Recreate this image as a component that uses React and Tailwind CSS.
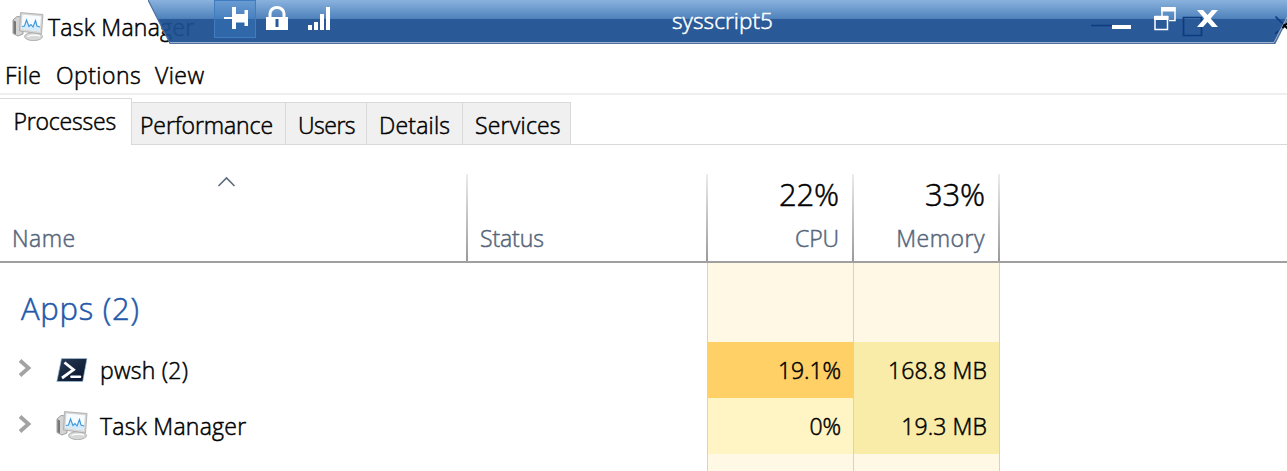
const MonitorIcon = () => (
  <svg width="32" height="30" viewBox="0 0 32 30" className="block shrink-0">
    <path d="M1 8 L5 4.500 L11 5 V22 L6 24 L1 21.500 Z" fill="#d3d4d3" stroke="#8c8c8c" strokeWidth=".8" />
    <path d="M1.500 8.500 L4 9.500 V22.500 L1.500 21 Z" fill="#777" />
    <path d="M19 20 H25 L26 25 H18 Z" fill="#bbb" />
    <ellipse cx="21.500" cy="24.600" rx="9" ry="4" fill="#d6d7d7" stroke="#a5a5a5" strokeWidth=".8" />
    <path d="M15.500 24.500 Q22 22 28 24" fill="none" stroke="#fff" strokeWidth="1.200" />
    <path d="M8.500 .6 L31 2.500 L29.500 22 L7.500 19 Z" fill="#d5d6d5" stroke="#a4a4a4" strokeWidth=".8" />
    <path d="M10.500 2.600 L29 4.200 L27.700 19.500 L9.300 17 Z" fill="#f6fbff" />
    <path d="M9.800 14 L12.500 14 L14.500 8 L17 14.500 L19 12.500 L21 15 L23.500 8.500 L25 14 L28 15 L27.700 19.500 L9.300 17 Z" fill="#d5ebfb" />
    <path d="M9.800 14.500 L12.500 14 L14.500 8 L17 14.500 L19 12.500 L21 15 L23.500 8.500 L25 14 L28 15" fill="none" stroke="#3c96d8" strokeWidth="1.100" />
  </svg>
);

const PwshIcon = () => (
  <svg width="32" height="26" viewBox="0 0 32 26" className="block shrink-0">
    <defs>
      <linearGradient id="shell" x1="0" y1="0" x2="1" y2="1">
        <stop offset="0" stopColor="#2a3c57" />
        <stop offset="1" stopColor="#061228" />
      </linearGradient>
    </defs>
    <path d="M5.500 1.500 H31 L26.700 24.500 H.8 Z" fill="url(#shell)" stroke="#9fc0dc" strokeWidth=".7" />
    <path d="M8.500 5.500 L17.500 12.700 L6 21" fill="none" stroke="#fff" strokeWidth="2.800" />
    <path d="M15.500 19.800 H24" stroke="#fff" strokeWidth="2.600" strokeLinecap="round" />
  </svg>
);

const Expander = () => (
  <svg width="14" height="18" viewBox="0 0 14 18" className="mb-[4px] block shrink-0">
    <path d="M2 1.500 L10.500 9 L2 16.500" fill="none" stroke="#a3a3a3" strokeWidth="3.800" />
  </svg>
);

const ColumnLine = () => <div className="h-[87px] w-[2px] shrink-0 bg-linear-to-b from-[#ececec] to-[#9b9b9b]" />;

const tabs = [
  { name: "Performance", cls: "w-[154px] pl-[8px]" },
  { name: "Users", cls: "w-[81px] pl-[12px] tracking-[-0.5px]" },
  { name: "Details", cls: "w-[96px] pl-[12px] tracking-[0.2px]" },
  { name: "Services", cls: "w-[108px] pl-[12px] tracking-[0.2px]" },
];

const Row = ({ icon, name, cpu, cpuClass, memory }) => (
  <div className="flex h-[56px] shrink-0 items-center">
    <div className="flex w-[707px] items-center pl-[18px]">
      <Expander />
      <div className="ml-[24px] flex w-[44px]">{icon}</div>
      <span className="tracking-[0.25px]">{name}</span>
    </div>
    <div className={"flex h-full w-[146px] items-center justify-end border-l border-[#dcd5a5] pr-[12px] " + cpuClass}>{cpu}</div>
    <div className="flex h-full w-[147px] items-center justify-end border-x border-[#dcd5a5] bg-[#f9eca8] pr-[12px] tracking-[0.1px]">{memory}</div>
  </div>
);

const EmptyCells = ({ children, cls }) => (
  <div className={"flex shrink-0 " + cls}>
    <div className="w-[707px]">{children}</div>
    <div className="w-[146px] border-l border-[#dcd5a5] bg-[#fef8e4]" />
    <div className="w-[147px] border-x border-[#dcd5a5] bg-[#fef8e4]" />
  </div>
);

const ConnectionBar = () => (
  <div className="absolute top-0 left-[148px] h-[46px] w-[1139px] overflow-hidden text-white">
    <svg width="1150" height="46" viewBox="0 0 1150 46" className="absolute top-0 left-0">
      <defs>
        <linearGradient id="bar" x1="0" y1="0" x2="0" y2="44" gradientUnits="userSpaceOnUse">
          <stop offset="0" stopColor="#82addb" />
          <stop offset=".42" stopColor="#457bb8" />
          <stop offset=".43" stopColor="#1c4f91" />
          <stop offset="1" stopColor="#1c4f91" />
        </linearGradient>
      </defs>
      <path d="M-9 -18 L22 43 H1127 L1158 -18 Z" fill="url(#bar)" fillOpacity=".94" />
      <path d="M943 25.500H964M1035.500 17.500H1053.500V35.500H1035.500ZM1127.500 16.500L1136 25M1127 34L1130 31" fill="none" stroke="#0f3b80" strokeWidth="1.700" />
      <path d="M-9 -18 L22 43.500 H1127 L1158 -18" fill="none" stroke="#4d6f9f" strokeWidth="1.200" />
      <path d="M22 42.500 H1126 L1150 -4" fill="none" stroke="#a3b3cb" strokeWidth="1" />
      <path d="M1135.500 24.500L1140 29M1134.500 28L1140 22.500" fill="none" stroke="#000" strokeWidth="2" />
    </svg>
    <div className="relative flex h-[42px] items-start pl-[66px]">
      <div className="flex h-[38px] w-[42px] border border-[#3f7cc0] bg-[#3b7cc4]/40">
        <svg width="40" height="37" viewBox="0 0 40 37" className="block">
          <path d="M9 16H17V18H9ZM17 6h4v22h-4ZM21 13H29.500V21.500H21ZM29.500 9h3.500v16h-3.500Z" fill="#fff" />
        </svg>
      </div>
      <svg width="24" height="32" viewBox="0 0 24 32" className="ml-[9px]">
        <path d="M5 18V13.500a7 6 0 0 1 14 0V18" fill="none" stroke="#fff" strokeWidth="3" />
        <path d="M1 17H23V30H1Z" fill="#fff" />
        <path d="M12 19V27" stroke="#28599b" strokeWidth="3" />
      </svg>
      <svg width="24" height="32" viewBox="0 0 24 32" className="ml-[19px]">
        <path d="M0 25h4v5H0ZM6 22h4v8H6ZM12 14h4v16h-4ZM18 7h4v23h-4Z" fill="#fff" />
      </svg>
      <span className="ml-[340px] w-[400px] pt-[7px] text-[22.500px] leading-[28px] tracking-[0.1px]">sysscript5</span>
      <svg width="112" height="36" viewBox="0 0 112 36" className="ml-[39px]">
        <path d="M1 25H20V29H1Z" fill="#fff" />
        <path d="M51 16.500V8H64V20.500H58M44 16.500H56.500V29.500H44Z" fill="none" stroke="#fff" strokeWidth="1.500" />
        <path d="M50 7H64.500V11.500H50ZM43 16H57.500V20H43Z" fill="#fff" />
        <path d="M86 10H92L96.500 15L101 10H107L99.700 18.500L107 27H101L96.500 22L92 27H86L93.300 18.500Z" fill="#fff" />
      </svg>
    </div>
  </div>
);

export default function App() {
  return (
    <div className="relative flex h-[471px] w-[1287px] flex-col overflow-hidden bg-white font-['Open_Sans','Noto_Sans',sans-serif] text-[23px] leading-[30px] font-light tracking-[-0.1px] text-black [-webkit-text-stroke:0.5px_currentColor]">
      <div className="flex h-[56px] shrink-0 items-start pt-[12px] pl-[12px]">
        <MonitorIcon />
        <span className="ml-[4px] tracking-[0.25px]">Task Manager</span>
      </div>
      <div className="flex h-[39px] shrink-0 border-b-2 border-[#efefef] pt-[4px] pl-[5px] tracking-[0.45px]">
        <span className="w-[51px]">File</span><span className="w-[99px]">Options</span><span>View</span>
      </div>
      <div className="flex h-[50px] shrink-0 items-end">
        <div className="h-[47px] w-[132px] border-t border-r border-[#d9d9d9] pt-[7px] pl-[13.5px] tracking-[-0.2px]">Processes</div>
        {tabs.map((t) => (
          <div key={t.name} className={"h-[43px] border-t border-r border-b border-[#d9d9d9] bg-[#f0f0f0] pt-[7px] " + t.cls}>{t.name}</div>
        ))}
        <div className="h-[43px] grow border-b border-[#d9d9d9]" />
      </div>
      <div className="flex h-[118px] shrink-0 items-end border-b-2 border-[#a0a0a0] text-[#56667b]">
        <div className="flex h-[87px] w-[466px] flex-col pl-[12px]">
          <svg width="20" height="14" viewBox="0 0 20 14" className="ml-[205px]"><path d="M1.500 12L9.500 4L17.500 12" fill="none" stroke="#5d6b7e" strokeWidth="1.600" /></svg>
          <span className="pt-[35px] tracking-[0.5px]">Name</span>
        </div>
        <ColumnLine />
        <div className="flex h-[87px] w-[238px] items-end pb-[8px] pl-[12px]">Status</div>
        <ColumnLine />
        <div className="flex h-[87px] w-[144px] flex-col items-end pr-[13px]"><span className="text-[31px] leading-[40px] text-black">22%</span><span className="pt-[9px]">CPU</span></div>
        <ColumnLine />
        <div className="flex h-[87px] w-[144px] flex-col items-end pr-[13px]"><span className="text-[31px] leading-[40px] text-black">33%</span><span className="pt-[9px] tracking-[0.5px]">Memory</span></div>
        <ColumnLine />
      </div>
      <EmptyCells cls="h-[79px]"><div className="pt-[25px] pl-[21px] text-[31px] leading-[40px] tracking-[0.75px] text-[#2258ab]">Apps (2)</div></EmptyCells>
      <Row icon={<PwshIcon />} name="pwsh (2)" cpu="19.1%" cpuClass="bg-[#ffd066]" memory="168.8 MB" />
      <Row icon={<MonitorIcon />} name="Task Manager" cpu="0%" cpuClass="bg-[#fff4c4]" memory="19.3 MB" />
      <EmptyCells cls="h-[17px]" />
      <ConnectionBar />
    </div>
  );
}
